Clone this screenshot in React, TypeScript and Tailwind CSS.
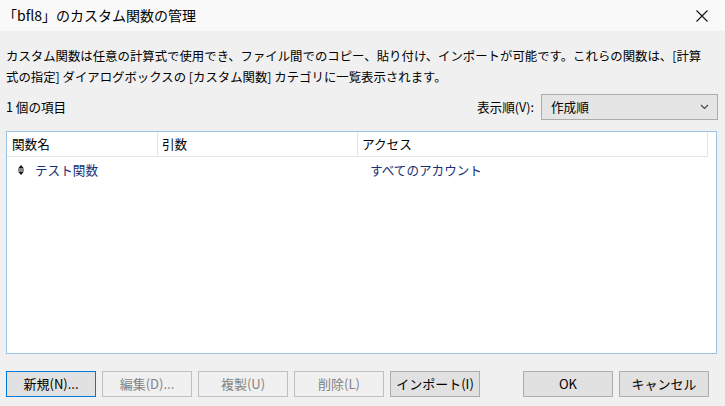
import React from "react";

const font = { fontFamily: '"Noto Sans CJK JP", "Noto Sans", sans-serif' };

function Btn({ label, primary, disabled, w = "w-[90px]" }: { label: string; primary?: boolean; disabled?: boolean; w?: string }) {
  const cls = primary
    ? "border-[#0078d7] bg-[#e1e1e1] text-black"
    : disabled
    ? "border-[#bfbfbf] bg-[#f0f0f0] text-[#838383]"
    : "border-[#adadad] bg-[#e1e1e1] text-black";
  return (
    <div className={`${w} h-[26px] border flex items-center justify-center text-[13px] ${cls}`}>{label}</div>
  );
}

export default function App() {
  return (
    <div className="w-[725px] h-[406px] bg-[#f0f0f0] flex flex-col text-black overflow-hidden" style={font}>
      <div className="h-[31px] bg-[#f9f9f9] flex items-center justify-between shrink-0">
        <div className="pl-[3px] text-[14px]">「bfl8」のカスタム関数の管理</div>
        <div className="w-[46px] h-[31px] flex items-center justify-center">
          <svg width="12" height="12" viewBox="0 0 12 12">
            <path d="M0.5 0.5 L11.5 11.5 M11.5 0.5 L0.5 11.5" stroke="#111" strokeWidth="1.1" />
          </svg>
        </div>
      </div>
      <div className="px-[6px] pt-[15px] text-[12.4px] leading-[21px] whitespace-nowrap">
        カスタム関数は任意の計算式で使用でき、ファイル間でのコピー、貼り付け、インポートが可能です。これらの関数は、[計算
        <br />
        式の指定] ダイアログボックスの [カスタム関数] カテゴリに一覧表示されます。
      </div>
      <div className="mt-[6px] h-[26px] flex items-center justify-between pl-[6px] pr-[7px] text-[12.6px]">
        <div>1 個の項目</div>
        <div className="flex items-center gap-[7px]">
          <span>表示順(V):</span>
          <div className="w-[177px] h-[26px] border border-[#adadad] bg-[#e5e5e5] flex items-center justify-between pl-[9px] pr-[8px]">
            <span>作成順</span>
            <svg width="9" height="6" viewBox="0 0 9 6">
              <path d="M1 1 L4.5 4.5 L8 1" stroke="#444" strokeWidth="1.1" fill="none" />
            </svg>
          </div>
        </div>
      </div>
      <div className="mx-[6px] mr-[8px] mt-[11px] h-[223px] border border-[#9cc3e5] bg-white flex flex-col text-[12.6px]">
        <div className="h-[25px] flex border-b border-[#e5e5e5] mr-[8px]">
          <div className="w-[151px] border-r border-[#e5e5e5] pl-[5px] flex items-center">関数名</div>
          <div className="w-[200px] border-r border-[#e5e5e5] pl-[4px] flex items-center">引数</div>
          <div className="flex-1 border-r border-[#e5e5e5] pl-[4px] flex items-center">アクセス</div>
        </div>
        <div className="h-[26px] flex items-center text-[#172f74]">
          <div className="w-[151px] flex items-center pl-[11px]">
            <svg width="6" height="10" viewBox="0 0 6 10" className="mr-[11px]">
              <path d="M3 0 L6 3.6 L0 3.6 Z M0 4.4 L6 4.4 L6 5.6 L0 5.6 Z M0 6.4 L6 6.4 L3 10 Z" fill="#111" />
            </svg>
            <span>テスト関数</span>
          </div>
          <div className="w-[200px]"></div>
          <div className="pl-[12px]">すべてのアカウント</div>
        </div>
      </div>
      <div className="mt-[17px] flex items-center px-[6px] gap-[6px]">
        <Btn label="新規(N)..." primary />
        <Btn label="編集(D)..." disabled />
        <Btn label="複製(U)" disabled />
        <Btn label="削除(L)" disabled />
        <Btn label="インポート(I)" />
        <div className="w-[31px]" />
        <Btn label="OK" />
        <Btn label="キャンセル" />
      </div>
    </div>
  );
}
